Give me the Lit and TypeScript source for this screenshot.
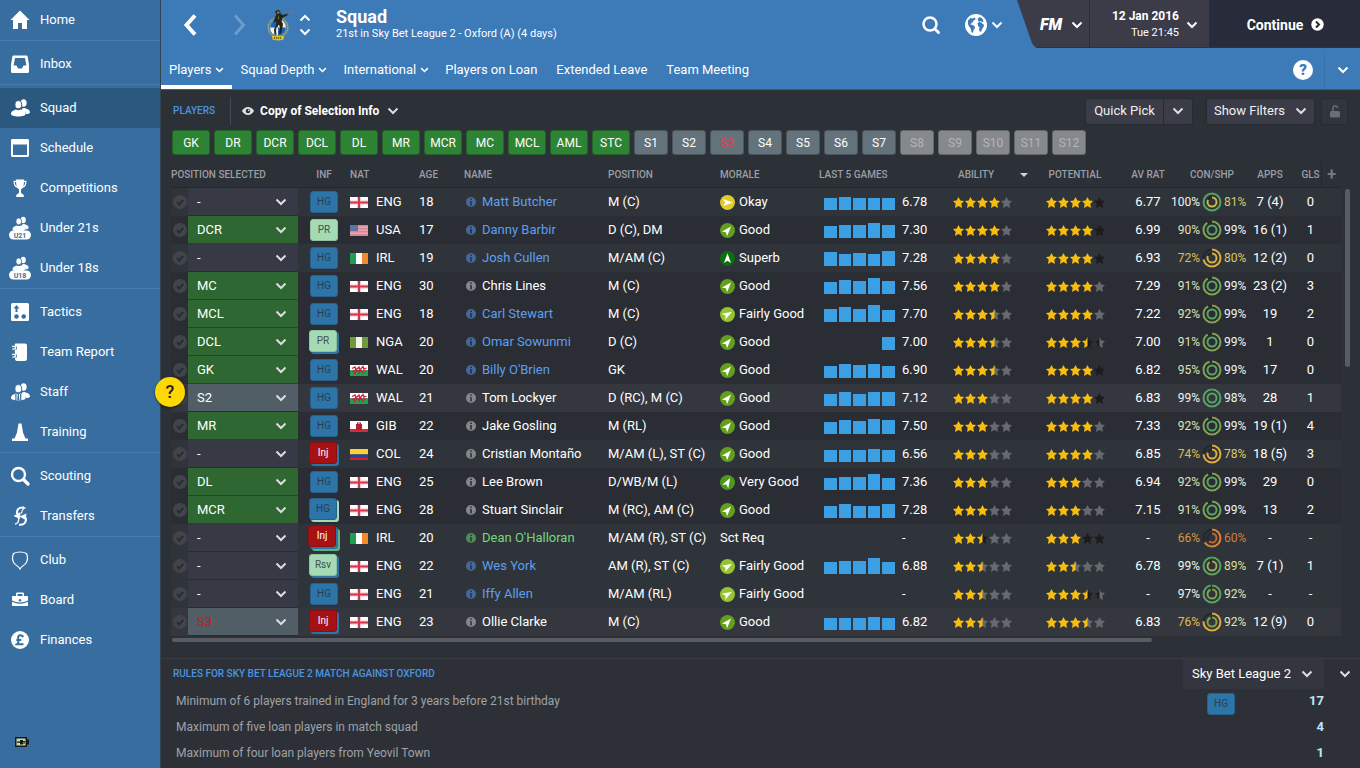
import { LitElement, html, css, svg, nothing } from "lit";
import { customElement } from "lit/decorators.js";
import { classMap } from "lit/directives/class-map.js";

interface Player {
  pos: string;
  inf: string[];
  nat: string;
  age: number;
  name: string;
  tone: string;
  role: string;
  morale: string;
  bars: number[];
  form: string;
  ability: string;
  potential: string;
  rating: string;
  con: number;
  shp: number;
  apps: string;
  goals: string;
}

const p = (
  pos: string, inf: string, nat: string, age: number, name: string, tone: string, role: string,
  morale: string, bars: number[], form: string, ability: string, potential: string,
  rating: string, con: number, shp: number, apps: string, goals: string,
): Player => ({ pos, inf: inf.split(" "), nat, age, name, tone, role, morale, bars, form, ability, potential, rating, con, shp, apps, goals });

// Star codes: F gold, G grey, K black, H gold/grey, B gold/black, C black/grey.
const PLAYERS: Player[] = [
  p("-", "HG", "ENG", 18, "Matt Butcher", "blue", "M (C)", "Okay", [12, 13, 12, 12, 12], "6.78", "FFFFG", "FFFFK", "6.77", 100, 81, "7 (4)", "0"),
  p("DCR", "PR", "USA", 17, "Danny Barbir", "blue", "D (C), DM", "Good", [12, 13, 13, 15, 13], "7.30", "FFFFG", "FFFFK", "6.99", 90, 99, "16 (1)", "1"),
  p("-", "HG", "IRL", 19, "Josh Cullen", "blue", "M/AM (C)", "Superb", [14, 12, 13, 12, 15], "7.28", "FFFFG", "FFFFK", "6.93", 72, 80, "12 (2)", "0"),
  p("MC", "HG", "ENG", 30, "Chris Lines", "white", "M (C)", "Good", [12, 14, 13, 16, 13], "7.56", "FFFFG", "FFFFG", "7.29", 91, 99, "23 (2)", "3"),
  p("MCL", "HG", "ENG", 18, "Carl Stewart", "blue", "M (C)", "Fairly Good", [13, 15, 13, 17, 12], "7.70", "FFFHG", "FFFFG", "7.22", 92, 99, "19", "2"),
  p("DCL", "PR HG", "NGA", 20, "Omar Sowunmi", "blue", "D (C)", "Good", [0, 0, 0, 0, 13], "7.00", "FFFHG", "FFFBC", "7.00", 91, 99, "1", "0"),
  p("GK", "HG", "WAL", 20, "Billy O'Brien", "blue", "GK", "Good", [12, 14, 13, 14, 12], "6.90", "FFFHG", "FFFFK", "6.82", 95, 99, "17", "0"),
  p("S2", "HG", "WAL", 21, "Tom Lockyer", "white", "D (RC), M (C)", "Good", [12, 14, 12, 14, 14], "7.12", "FFFGG", "FFFFK", "6.83", 99, 98, "28", "1"),
  p("MR", "HG", "GIB", 22, "Jake Gosling", "white", "M (RL)", "Good", [12, 14, 13, 15, 14], "7.50", "FFFGG", "FFFFG", "7.33", 92, 99, "19 (1)", "4"),
  p("-", "Inj HG", "COL", 24, "Cristian Montaño", "white", "M/AM (L), ST (C)", "Good", [12, 12, 12, 13, 12], "6.56", "FFFGG", "FFFFG", "6.85", 74, 78, "18 (5)", "3"),
  p("DL", "HG", "ENG", 25, "Lee Brown", "white", "D/WB/M (L)", "Very Good", [12, 13, 13, 16, 12], "7.36", "FFFGG", "FFFGG", "6.94", 92, 99, "29", "0"),
  p("MCR", "HG PR", "ENG", 28, "Stuart Sinclair", "white", "M (RC), AM (C)", "Good", [12, 14, 12, 12, 14], "7.28", "FFFGG", "FFFGG", "7.15", 91, 99, "13", "2"),
  p("-", "Inj HG Lst", "IRL", 20, "Dean O'Halloran", "green", "M/AM (R), ST (C)", "Sct Req", [], "-", "FFBGG", "FFFKK", "-", 66, 60, "-", "-"),
  p("-", "Rsv HG", "ENG", 22, "Wes York", "blue", "AM (R), ST (C)", "Fairly Good", [12, 13, 13, 16, 12], "6.88", "FFHGG", "FFHGG", "6.78", 99, 89, "7 (1)", "1"),
  p("-", "HG", "ENG", 21, "Iffy Allen", "blue", "M/AM (RL)", "Fairly Good", [], "-", "FFHGG", "FFFBC", "-", 97, 92, "-", "-"),
  p("S3", "Inj HG", "ENG", 23, "Ollie Clarke", "white", "M (C)", "Good", [12, 12, 12, 13, 12], "6.82", "FFHGG", "FFFHG", "6.83", 76, 92, "12 (9)", "0"),
];

const FIRST_TEAM = ["GK", "DR", "DCR", "DCL", "DL", "MR", "MCR", "MC", "MCL", "AML", "STC"];
const SUBS = ["S1", "S2", "S3", "S4", "S5", "S6", "S7", "S8", "S9", "S10", "S11", "S12"];

const RULES = [
  { text: "Minimum of 6 players trained in England for 3 years before 21st birthday", badge: "HG", count: "17" },
  { text: "Maximum of five loan players in match squad", badge: "", count: "4" },
  { text: "Maximum of four loan players from Yeovil Town", badge: "", count: "1" },
];

const COLUMNS = [17, 110, 52, 69, 45, 144, 112, 99, 134, 93, 76, 52, 76, 40, 31, 20];

const people = svg`
  <ellipse cx="15.6" cy="7" rx="3" ry="3.8"/>
  <path d="M14 12.5c1 0 1.500-.6 2.300-.6 2.700 1 5.700 1.600 5.700 4.300 0 1-1.500 1.700-3.600 1.900-1-1.900-2.600-3-4.600-3.800z"/>
  <ellipse class="cut" cx="10.300" cy="8.700" rx="3.400" ry="4.100"/>
  <path d="M3 18c0-3 2.800-3.700 5-4.600 1.500 1 3.200 1 4.700 0 2.200.9 5 1.600 5 4.600 0 1.500-3.200 2.500-7.400 2.500S3 19.500 3 18z"/>`;

const youth = (label: string) => svg`
  <g transform="translate(2 -2) scale(.85)">${people}</g>
  <rect x="1" y="14.500" width="22" height="9" rx="4.500"/>
  <text class="pill" x="12" y="21.500" text-anchor="middle">${label}</text>`;

const ICONS: Record<string, unknown> = {
  home: svg`<path d="M12 2.500 2.500 12H5v9h5v-6h4v6h5v-9h2.500L18.500 9z"/>`,
  inbox: svg`<path fill-rule="evenodd" d="M6 3.500h12c1 0 1.500.5 1.700 1.300L21 13v6.500c0 .9-.6 1.500-1.500 1.500h-15c-.9 0-1.500-.6-1.500-1.500V13l1.300-8.200C4.500 4 5 3.500 6 3.500zM7 6 5.600 13.500H8.500L10 16.500h4l1.500-3h2.900L17 6z"/>`,
  squad: people,
  schedule: svg`<path fill-rule="evenodd" d="M4.500 3h15c.9 0 1.500.6 1.500 1.500v15c0 .9-.6 1.500-1.500 1.500h-15c-.9 0-1.500-.6-1.500-1.500v-15C3 3.600 3.600 3 4.500 3zM5 8.500V19h14V8.500z"/>`,
  cup: svg`<path fill-rule="evenodd" d="M8 3.500h8v1.300h2.500c0 4-1 6.200-3.700 7-.6.9-1.200 1.300-1.800 1.600v3.200c0 1.400 2.800 1.500 2.800 3V21H8.200v-1.400c0-1.500 2.800-1.600 2.800-3v-3.200c-.6-.3-1.200-.7-1.800-1.600-2.700-.8-3.700-3-3.700-7H8zM6.800 6c.2 2 .6 3.400 1.700 4.200L8 6zm10.400 0H16l-.5 4.200c1.100-.8 1.500-2.200 1.700-4.200z"/>`,
  u21: youth("U21"),
  u18: youth("U18"),
  tactics: svg`<rect x="3" y="3" width="18" height="18" rx="1.500"/><g fill="#386e9f"><path d="M8.500 5 5.500 8.500h2V12h2V8.500h2z"/><circle cx="8.500" cy="16.500" r="2.300"/><circle cx="15.700" cy="16.500" r="2.300"/></g>`,
  report: svg`<path d="M7.500 3.500h9.500c1.400 0 2 .7 2 2v13c0 1.500-.7 2.500-2 2.500H9c-1.200 0-1.700-.8-2-2l-.3-13c0-1.500.2-2.500.8-2.500z"/><g fill="none" stroke="#386e9f" stroke-width="3"><path d="M4 8h5M4 16h5"/></g><path fill="none" stroke="#fff" stroke-width="1.300" d="M4 6.500c5-1 5 3 .500 2.500M4 14.500c5-1 5 3 .500 2.500"/>`,
  staff: svg`${people}<path fill="#386e9f" d="M7.300 14h1.200v7H7.300zM12.100 14h1.200v7h-1.200zM9.800 14h1l.6 6.500h-2.200z"/>`,
  training: svg`<path d="M10.500 3.500h3l1.500 9 2.500 6H20V21H4v-2.500h2.500L9 12.500z"/>`,
  scouting: svg`<circle cx="10.500" cy="10.500" r="6.500" fill="none" stroke="#fff" stroke-width="2.400"/><path d="m15.500 15.500 4.500 4.500" stroke="#fff" stroke-width="3.400" stroke-linecap="round"/>`,
  transfers: svg`<g fill="none" stroke="#fff" stroke-width="2"><path d="M16 3.500C10.500 3 8.500 6 9 10"/><path d="M11 20.800c5.500.5 7.500-2.500 7-7.300"/></g><path d="M5.500 12 12.500 8 12 15zM11.500 12.500 18.500 9.500l-1 6.500z"/><path fill="none" stroke="#fff" stroke-width="1.300" d="M17.500 3.500c-3 1.500-4 3-4 6M7 20c3.500-.5 4-2.500 3.500-6"/>`,
  club: svg`<path fill="none" stroke="#fff" stroke-width="1.200" d="M12 4c3 0 4.500.5 6.500 1.500C20 9 20 12 18 15c-1.500 2.500-4.500 3-6 6-1.500-3-4.500-3.500-6-6-2-3-2-6-.5-9.500C7.500 4.500 9 4 12 4z"/>`,
  board: svg`<path fill-rule="evenodd" d="M8 8V6c0-1 .5-1.500 1.500-1.500h5c1 0 1.500.5 1.500 1.500v2h3c.7 0 1 .3 1 1v3.500c-3 1.300-5 2-8 2s-5-.7-8-2V9c0-.7.300-1 1-1zm1.500 0h5V6h-5z"/><path d="M4 13.800c3 1.300 5 1.900 8 1.900s5-.6 8-1.900V17c0 .7-.3 1-1 1H5c-.7 0-1-.3-1-1z"/><circle cx="12" cy="12.300" r="1.200" fill="#386e9f"/>`,
  money: svg`<circle cx="12" cy="12" r="9"/><path fill="none" stroke="#386e9f" stroke-width="2" d="M15 9.300c-.4-1.500-1.500-2-2.500-2-2 0-2.700 1.500-2.300 3.200.6 2.500.4 4.500-1.200 5.700h6.500M8.300 12h5"/>`,
};

const NAV: [string, string][][] = [
  [["home", "Home"]],
  [["inbox", "Inbox"]],
  [["squad", "Squad"], ["schedule", "Schedule"], ["cup", "Competitions"], ["u21", "Under 21s"], ["u18", "Under 18s"]],
  [["tactics", "Tactics"], ["report", "Team Report"], ["staff", "Staff"], ["training", "Training"]],
  [["scouting", "Scouting"], ["transfers", "Transfers"]],
  [["club", "Club"], ["board", "Board"], ["money", "Finances"]],
];

const TABS: [string, boolean][] = [
  ["Players", true], ["Squad Depth", true], ["International", true],
  ["Players on Loan", false], ["Extended Leave", false], ["Team Meeting", false],
];

const FLAGS: Record<string, unknown> = {
  ENG: svg`<path fill="#fff" d="M0 0h18v11H0z"/><path fill="#f0c4ca" d="M7 0h4v11H7zM0 3.500h18v4H0z"/><path fill="#d3354a" d="M8 0h2v11H8zM0 4.500h18v2H0z"/>`,
  USA: svg`<path fill="#e8a9b2" d="M0 0h18v11H0z"/><path fill="#d98493" d="M0 0h18v1.500H0zM0 3h18v1.500H0zM0 6h18v1.500H0zM0 9h18v2H0z"/><path fill="#5c74a6" d="M0 0h8v6H0z"/>`,
  IRL: svg`<path fill="#fff" d="M0 0h18v11H0z"/><path fill="#1f9d50" d="M0 0h6v11H0z"/><path fill="#f58a2a" d="M12 0h6v11h-6z"/>`,
  NGA: svg`<path fill="#f2f4ec" d="M0 0h18v11H0z"/><path fill="#6e9a3a" d="M0 0h6v11H0zM12 0h6v11h-6z"/>`,
  WAL: svg`<path fill="#fff" d="M0 0h18v5.500H0z"/><path fill="#21a14d" d="M0 5.500h18V11H0z"/><path fill="none" stroke="#c9203c" stroke-width="1.300" d="M2 3.500 5 2l1 3-3 1.500 2.500 1L4 9.500M6 5l3-3 1 3.500L8.500 9M10 5l3-3.500L14 4l2.500-1M11.500 6.500 14 8.500M13 5l3 1.500M6 6h6"/>`,
  GIB: svg`<path fill="#fff" d="M0 0h18v11H0z"/><path fill="#d8283c" d="M0 8h18v3H0z"/><path fill="#b3202e" d="M6 3h1V1.500h1V3h.5V1h1v2h.5V1.500h1V3h1v6H6z"/>`,
  COL: svg`<path fill="#fbd13a" d="M0 0h18v5.500H0z"/><path fill="#2243a0" d="M0 5.500h18v3H0z"/><path fill="#d21f35" d="M0 8.500h18V11H0z"/>`,
};

const MORALE: Record<string, [string, number]> = {
  "Okay": ["#dfcb2c", 90],
  "Fairly Good": ["#94c52c", 60],
  "Good": ["#62a01c", 42],
  "Very Good": ["#4d9a1c", 30],
  "Superb": ["#0f6c10", 0],
};

const STAR = "M5.500 0 7.300 3.500 11 4 8.300 6.800 9 10.900 5.500 9 2 10.900 2.700 6.800 0 4 3.700 3.500z";
const STAR_LEFT = "M5.500 0V9L2 10.900 2.700 6.800 0 4 3.700 3.500z";
const GOLD = "#f9bd0c", GREY = "#67696f", BLACK = "#1c1c1e";
const STAR_FILL: Record<string, [string, string]> = {
  F: [GOLD, GOLD], G: [GREY, GREY], K: [BLACK, BLACK], H: [GOLD, GREY], B: [GOLD, BLACK], C: [BLACK, GREY],
};

const chevron = () => html`<svg class="chev" viewBox="0 0 12 8" aria-hidden="true"><path d="m1.500 1.500 4.500 4.500 4.500-4.500"/></svg>`;

const stars = (code: string) => html`
  <svg class="stars" viewBox="0 0 60 11" role="img" aria-label="Stars">
    ${[...code].map((c, i) => {
      const [left, right] = STAR_FILL[c];
      return svg`<g transform="translate(${i * 12} 0)"><path d=${STAR} fill=${right}/>${left !== right ? svg`<path d=${STAR_LEFT} fill=${left}/>` : nothing}</g>`;
    })}
  </svg>`;

const ringTone = (v: number) =>
  v >= 97 ? "#58a566" : v >= 90 ? "#82a34f" : v >= 85 ? "#9fac4e" : v >= 80 ? "#d2b741" : v >= 70 ? "#e3ad3d" : v >= 65 ? "#dd8535" : "#cb6433";
const textTone = (v: number) =>
  v >= 97 ? "t-top" : v >= 90 ? "t-high" : v >= 85 ? "t-good" : v >= 77 ? "t-mid" : v >= 70 ? "t-low" : v >= 65 ? "t-poor" : "t-bad";

const arc = (r: number, v: number) => {
  const len = 2 * Math.PI * r;
  return svg`<circle cx="10" cy="10" r=${r} stroke="#24272d"/>
    <circle cx="10" cy="10" r=${r} stroke=${ringTone(v)} stroke-dasharray="${(len * v) / 100} ${len}" transform="rotate(-90 10 10)"/>`;
};

const badge = (codes: string[]) => html`<span class=${"badge b-" + codes.join("-").toLowerCase()}>${codes[0]}</span>`;

@customElement("app-root")
export class AppRoot extends LitElement {
  static styles = css`
    :host {
      display: grid;
      grid-template-columns: 160px minmax(0, 1fr);
      min-height: 100vh;
      position: relative;
      background: #2c3037;
      color: #fff;
      font: 13px/16px Roboto, "Liberation Sans", sans-serif;
    }
    * { box-sizing: border-box; }
    button, select { font: inherit; color: inherit; background: none; border: 0; padding: 0; margin: 0; }
    button { display: inline-flex; align-items: center; cursor: pointer; }
    select { appearance: none; cursor: pointer; }
    option { background: #373a44; color: #fff; }
    a { color: inherit; text-decoration: none; }
    h1, h2, p { margin: 0; font-size: inherit; }
    svg { display: block; flex: none; }
    .chev { width: 12px; height: 8px; fill: none; stroke: #dcdddf; stroke-width: 2; }

    .side { background: #386e9f; display: flex; flex-direction: column; justify-content: space-between; }
    .group { list-style: none; margin: 0; border-bottom: 1px solid #4a7eae; padding: 0; }
    .group + .group { padding-top: 3px; }
    .group:last-child { border-bottom: 0; }
    .nav { display: flex; align-items: center; gap: 8px; height: 40px; padding-left: 8px; }
    .nav svg { width: 24px; height: 24px; fill: #fff; }
    .nav.on { background: #2b587f; }
    .cut { stroke: #386e9f; stroke-width: 1; }
    .nav.on .cut { stroke: #2b587f; }
    .pill { font: 700 7px Roboto, sans-serif; fill: #386e9f; }
    .battery { width: 14px; height: 10px; margin: 0 0 21px 15px; }

    .main { border-left: 1px solid #33424f; min-width: 0; display: flex; flex-direction: column; }
    .head { background: #3c7ab8; border-bottom: 1px solid #2f5f8f; height: 90px; display: flex; flex-direction: column; }
    .top { display: flex; height: 50px; align-items: flex-start; }
    .top-left { display: flex; align-items: center; height: 50px; flex: 1; padding-left: 22px; }
    .arrow { width: 14px; height: 22px; fill: none; stroke: #fff; stroke-width: 4; }
    .back { margin-right: 36px; }
    .fwd { opacity: .25; margin-right: 19px; }
    .fwd .arrow { stroke-width: 3; }
    .crest { width: 28px; height: 32px; }
    .updown { display: flex; flex-direction: column; gap: 6px; margin: 0 25px 0 5px; }
    .updown .chev, .tools .chev, .clock .chev, .tabs .chev { stroke: #fff; }
    .flip { transform: rotate(180deg); }
    .title { padding-bottom: 4px; }
    .title h1 { font-size: 18px; line-height: 20px; font-weight: 700; }
    .title p { font-size: 11px; line-height: 13px; }
    .tools { display: flex; align-items: center; gap: 24px; height: 50px; padding-right: 14px; }
    .tools button { gap: 4px; }
    .find { width: 20px; height: 20px; fill: none; stroke: #fff; stroke-width: 2.500; stroke-linecap: round; }
    .globe { width: 22px; height: 22px; }
    .clock {
      display: flex; height: 48px; background: #3b3c47; border-bottom: 1px solid #2a3342;
      clip-path: polygon(0 0, 100% 0, 100% 100%, 20px 100%, 17px 46px, 15px 43px);
    }
    .fm { width: 73px; padding: 2px 0 0 23px; gap: 9px; border-right: 1px solid #2a2c37; }
    .fm-logo { font: italic 900 16px/16px Roboto, sans-serif; }
    .date { width: 119px; justify-content: flex-end; gap: 7px; padding: 2px 11px 0 0; text-align: right; }
    .date b { display: block; font-size: 12px; }
    .date span span { font-size: 11px; }
    .continue { width: 151px; justify-content: center; gap: 8px; background: #282b39; font-weight: 700; font-size: 14px; padding: 2px 0 0 2px; }
    .continue svg { width: 13px; height: 13px; }
    .tabs { display: flex; align-items: stretch; height: 40px; }
    .tab { display: flex; align-items: center; gap: 4px; padding: 0 8px; border-top: 4px solid transparent; border-bottom: 4px solid transparent; }
    .tab .chev { width: 9px; height: 6px; }
    .tab.plain { padding-right: 11px; }
    .tab.on { border-bottom-color: #fff; }
    .tab-end { margin-left: auto; display: flex; align-items: center; }
    .help { width: 20px; height: 20px; border-radius: 50%; background: #fff; color: #3c7ab8; font-weight: 900; font-size: 15px; justify-content: center; margin-right: 11px; }
    .more { height: 39px; width: 36px; justify-content: center; border-left: 1px solid #3870a9; }

    .bar { display: flex; align-items: center; height: 40px; padding: 2px 12px 0; }
    .bar h2, .rules h2 { color: #4a95e0; font-size: 10px; font-weight: 500; }
    .view { height: 28px; margin-left: 15px; padding-left: 11px; gap: 6px; border-left: 1px solid #484b52; font-weight: 700; font-size: 12px; }
    .view .eye { width: 12px; height: 8px; }
    .view .chev { margin-left: 2px; }
    .acts { margin-left: auto; display: flex; align-items: center; gap: 6px; }
    .btn { height: 27px; background: #3a3c47; border: 1px solid #262a31; border-radius: 3px; justify-content: center; color: #f0f0f0; }
    .split { display: flex; margin-right: 7px; }
    .quick { width: 79px; border-radius: 3px 0 0 3px; }
    .drop { width: 29px; border-left: 0; border-radius: 0 3px 3px 0; }
    .filters { width: 109px; gap: 10px; }
    .lock { width: 27px; background: #31353c; }
    .lock svg { width: 12px; height: 13px; }

    .chips { display: flex; gap: 4px; padding: 0 11px; height: 31px; align-items: flex-start; }
    .chip { width: 38px; height: 25px; justify-content: center; border-radius: 3px; background: #2d8434; border: 1px solid #236329; font-size: 12px; }
    .chip.sub { width: 34px; background: #64737b; border-color: #4a545b; }
    .chip.out { color: #e5404a; }
    .chip.off { background: #85888c; border-color: #63666b; color: #b4b6b9; }

    .grid { display: flex; gap: 4px; padding: 0 10px; }
    table { table-layout: fixed; border-spacing: 0; width: 100%; }
    .squad { flex: 1; min-width: 0; }
    .squad th { height: 27px; padding: 1px 0 0; text-align: left; font-size: 10px; font-weight: 500; color: #9b9ea3; white-space: nowrap; border-bottom: 1px solid #24272d; }
    .squad th.mid { text-align: center; }
    .squad td { height: 28px; padding: 0; white-space: nowrap; }
    .squad td.mid { text-align: center; }
    .squad th.plus { border-left: 1px solid #24272d; text-align: center; font-size: 16px; color: #777a80; font-weight: 700; }
    .squad .gls { padding-left: 10px; text-align: center; }
    .sorted { display: flex; align-items: center; justify-content: space-between; padding: 0 18px 0 5px; }
    .sorted i { border: 4px solid transparent; border-top-color: #d0d2d5; border-bottom: 0; }
    .r-idle { background: #2f343a; }
    .r-team { background: #2a2d34; }
    .r-sub { background: #34383e; }
    .tick { display: grid; place-items: center; height: 28px; }
    .tick input, .tick svg { grid-area: 1 / 1; }
    .tick input { appearance: none; margin: 0; width: 14px; height: 14px; border-radius: 50%; background: #414449; }
    .tick svg { width: 10px; height: 10px; fill: none; stroke: #2a2d33; stroke-width: 2; pointer-events: none; }
    .pick { display: grid; align-items: center; height: 28px; border-bottom: 1px solid #2a2c33; background: #373a44; }
    .pick select { grid-area: 1 / 1; width: 100%; height: 27px; padding-left: 9px; }
    .pick .chev { grid-area: 1 / 1; justify-self: end; margin-right: 11px; pointer-events: none; }
    .r-team .pick { background: #2e6732; border-bottom-color: #22482a; }
    .r-sub .pick { background: #525e66; }
    .pick.out { color: #d0121c; }

    .badge { display: inline-grid; place-items: center; width: 28px; height: 22px; border-radius: 3px; font-size: 10px; line-height: 12px; vertical-align: middle; background: #2d74a9; color: #2c3c50; border: 1px solid #27618f; }
    .b-pr, .b-pr-hg, .b-rsv-hg { background: #a4dab4; border-color: #8fc3a0; color: #42514c; }
    .b-inj-hg, .b-inj-hg-lst { background: #a61214; border-color: #8a0f12; color: #fff; }
    .b-pr-hg, .b-rsv-hg, .b-inj-hg, .b-hg-pr { margin: 0 2px 2px 0; }
    .b-pr-hg, .b-rsv-hg, .b-inj-hg { box-shadow: 2px 2px 0 #2d74a9; }
    .b-hg-pr { box-shadow: 2px 2px 0 #a4dab4; }
    .b-inj-hg-lst { margin: 0 4px 4px 0; box-shadow: 2px 2px 0 #2d74a9, 4px 4px 0 #5fb27a; }

    .row { display: flex; align-items: center; }
    .flag { width: 18px; height: 11px; margin-right: 8px; }
    .info { width: 10px; height: 10px; margin: 0 6px 0 2px; fill: #83868a; }
    .n-blue { color: #5e9ff0; }
    .n-blue .info { fill: #44689a; }
    .n-green { color: #76d77c; }
    .n-green .info { fill: #4d8d57; }
    .face { width: 15px; height: 15px; margin-right: 4px; }
    .form { display: grid; grid-template-columns: 5px 71px 1fr; align-items: center; height: 28px; }
    .bars { display: grid; grid-template-columns: repeat(5, 1fr); gap: 2px; align-items: end; align-self: end; margin-bottom: 6px; }
    .bars i { background: #3aa0e3; }
    .form span { padding-left: 7px; grid-column: 3; }
    .bars { grid-column: 2; }
    .stars { width: 60px; height: 11px; }
    .cond { display: grid; grid-template-columns: 26px 20px 26px; column-gap: 2px; justify-content: center; align-items: center; font-size: 12px; }
    .cond svg { width: 20px; height: 20px; fill: none; stroke-width: 2; }
    .cond span { justify-self: end; }
    .cond span:last-child { justify-self: start; }
    .t-top { color: #f0f5ee; }
    .t-high { color: #dfe3b4; }
    .t-good { color: #dfdc98; }
    .t-mid { color: #ddc765; }
    .t-low { color: #e1bd50; }
    .t-poor { color: #dd9440; }
    .t-bad { color: #d57a3d; }
    .vbar { width: 5px; height: 178px; margin-top: 28px; border-radius: 3px; background: #5a5c61; }
    .hbar { height: 4px; margin: 2px 208px 0 11px; border-radius: 2px; background: #5a5c61; }

    .rules { margin-top: 16px; border-top: 1px solid #393c42; background: #2d3137; flex: 1; }
    .rules-head { display: flex; align-items: center; height: 30px; padding: 0 9px 0 12px; }
    .league { margin-left: auto; display: grid; align-items: center; background: #33363e; width: 141px; height: 30px; }
    .league select { grid-area: 1 / 1; padding-left: 9px; height: 30px; }
    .league .chev { grid-area: 1 / 1; justify-self: end; margin-right: 11px; pointer-events: none; }
    .fold { margin-left: 15px; }
    .rules td { height: 26px; padding: 0 0 2px; font-size: 12px; color: #9fa2a6; }
    .rules td:first-child { padding-left: 15px; }
    .rules td:last-child { padding-right: 36px; text-align: right; font-weight: 700; font-size: 13px; color: #c4e4f8; }
    .rules .mark { line-height: 0; padding: 4px 0 0; }

    .guide {
      position: absolute; left: 155px; top: 377px; width: 30px; height: 30px; border-radius: 50%;
      background: #fdd804; color: #222; font-size: 18px; font-weight: 500; justify-content: center;
      box-shadow: 0 1px 3px #0008;
    }
  `;

  render() {
    return html`
      <nav class="side">
        <div>${NAV.map((group) => html`<ul class="group">
          ${group.map(([icon, label]) => html`<li><a href="#" class=${classMap({ nav: true, on: label === "Squad" })}>
            <svg viewBox="0 0 24 24" aria-hidden="true">${ICONS[icon]}</svg>${label}</a></li>`)}
        </ul>`)}</div>
        <svg class="battery" viewBox="0 0 14 10" aria-hidden="true">
          <path fill="#16181a" d="M0 0h12v2.500h2v5h-2V10H0z"/><path fill="#c3dba6" d="M1.500 1.500h9v7h-9z"/>
          <path fill="#16181a" d="M2 4.500h3V3h3v1h2v1H8v.6h2v1H8V7.500H5V5.700H2z"/>
        </svg>
      </nav>
      <main class="main">
        ${this.header()}
        ${this.toolbar()}
        <div class="chips">
          ${FIRST_TEAM.map((c) => html`<button class="chip">${c}</button>`)}
          ${SUBS.map((c, i) => html`<button class=${classMap({ chip: true, sub: true, out: c === "S3", off: i > 6 })}>${c}</button>`)}
        </div>
        <div class="grid">
          ${this.table()}
          <div class="vbar"></div>
        </div>
        <div class="hbar"></div>
        ${this.rules()}
      </main>
      <button class="guide" aria-label="Guide">?</button>
    `;
  }

  header() {
    return html`<header class="head">
      <div class="top">
        <div class="top-left">
          <button class="back" aria-label="Back"><svg class="arrow" viewBox="0 0 14 22"><path d="M12 1.500 3.500 11 12 20.500"/></svg></button>
          <button class="fwd" aria-label="Forward"><svg class="arrow" viewBox="0 0 14 22"><path d="M2 1.500 10.500 11 2 20.500"/></svg></button>
          <svg class="crest" viewBox="0 0 28 32" aria-hidden="true">
            <circle cx="12" cy="18.500" r="11" fill="#5d8496"/><circle cx="12" cy="18.500" r="9.700" fill="none" stroke="#c3bf86" stroke-width="1" stroke-dasharray="1.500 1"/>
            <circle cx="12" cy="18.500" r="8" fill="#eef2f6"/>
            <path fill="#1d63b4" d="M4 18.500H12v-8a8 8 0 0 0-8 8zM12 18.500h8a8 8 0 0 1-8 8z"/>
            <path fill="#25251a" d="M9 3 11 1l3 .5.500 3 2 1.500 5.500-1.500.5 1.200-6 3-1 3.500 1.500 2.500-.5 4-1.500 6h-2l1-6-1-3-2.500 2-.5 4 .5 4H8.500L8 20.500l2-4.500.500-4-2 1.500-1-1L9 8.500 10.500 5z"/>
            <path fill="#8b8155" d="M11 2.500h2.500v2H11zM12 6l1 3-1 2z"/>
            <path stroke="#7d7a62" stroke-width=".8" d="M21 5.500 28 2"/>
            <path fill="#e0c41e" d="M6 27h12l-.5 3.500q-5.500 2-11 0z"/><path stroke="#5a4c10" stroke-width="1.500" stroke-dasharray="1.200 .8" d="M8 29h8"/>
          </svg>
          <div class="updown">
            <button class="flip" aria-label="Previous team">${chevron()}</button>
            <button aria-label="Next team">${chevron()}</button>
          </div>
          <div class="title"><h1>Squad</h1><p>21st in Sky Bet League 2 - Oxford (A) (4 days)</p></div>
        </div>
        <div class="tools">
          <button aria-label="Search"><svg class="find" viewBox="0 0 20 20"><circle cx="9" cy="9" r="6.500"/><path stroke-width="3" d="m14.500 14.500 3 3"/></svg></button>
          <button aria-label="World">
            <svg class="globe" viewBox="0 0 22 22"><circle cx="11" cy="11" r="11" fill="#fff"/>
              <path fill="#3c7ab8" d="M3 6.500 5.500 4l2 .5L10 3.500l.5 2-2 1L8 8 6.500 9l-1 1.500 2 .5 2 1 .5 2-1.500 2-.5 3-1.500-1-1-4-1.500-1.500L3 10zM12.500 5l2-2 2 1 1.500 1.500.500 2-1.500.5-1.500-1-1.500 1zM12.500 9l2-1 2 .5 1 1.500 1.500.5L18.500 13l-1.500 2-.5 2-1.500 1-1-2.500.5-2-1.500-1.500z"/></svg>
            ${chevron()}
          </button>
        </div>
        <div class="clock">
          <button class="fm" aria-label="Game menu"><span class="fm-logo">FM</span>${chevron()}</button>
          <button class="date"><span><b>12 Jan 2016</b><span>Tue 21:45</span></span>${chevron()}</button>
          <button class="continue">Continue
            <svg viewBox="0 0 13 13"><circle cx="6.500" cy="6.500" r="6.200" fill="#fff"/><path d="M5 3.500 8 6.500 5 9.500" fill="none" stroke="#282b39" stroke-width="2"/></svg>
          </button>
        </div>
      </div>
      <nav class="tabs">
        ${TABS.map(([label, menu], i) => html`<a href="#" class=${classMap({ tab: true, on: i === 0, plain: !menu })}>${label}${menu ? chevron() : nothing}</a>`)}
        <div class="tab-end"><button class="help" aria-label="Help">?</button><button class="more" aria-label="More">${chevron()}</button></div>
      </nav>
    </header>`;
  }

  toolbar() {
    return html`<section class="bar">
      <h2>PLAYERS</h2>
      <button class="view">
        <svg class="eye" viewBox="0 0 12 8"><path fill="#e3e3e3" d="M0 4C3-1.300 9-1.300 12 4 9 9.300 3 9.300 0 4z"/><circle cx="6" cy="4" r="2.300" fill="#2c3037"/><circle cx="6.700" cy="3.400" r=".8" fill="#e3e3e3"/></svg>
        Copy of Selection Info ${chevron()}
      </button>
      <div class="acts">
        <div class="split"><button class="btn quick">Quick Pick</button><button class="btn drop" aria-label="Quick pick options">${chevron()}</button></div>
        <button class="btn filters">Show Filters ${chevron()}</button>
        <button class="btn lock" aria-label="Lock"><svg viewBox="0 0 12 13"><path fill="none" stroke="#6b6e73" stroke-width="1.500" d="M4 6V3.500a2.300 2.300 0 0 1 4.600-.3"/><rect x="1" y="6" width="10" height="6.500" rx="1.500" fill="#6b6e73"/></svg></button>
      </div>
    </section>`;
  }

  table() {
    return html`<table class="squad">
      <colgroup>${COLUMNS.map((w) => html`<col width=${w}>`)}</colgroup>
      <thead><tr>
        <th colspan="2">POSITION SELECTED</th><th class="mid">INF</th><th>NAT</th><th>AGE</th><th>NAME</th><th>POSITION</th>
        <th>MORALE</th><th>LAST 5 GAMES</th><th><div class="sorted">ABILITY<i></i></div></th><th>&nbsp;POTENTIAL</th>
        <th class="mid">AV RAT</th><th class="mid">CON/SHP</th><th class="mid">APPS</th><th class="gls">GLS</th><th class="plus">+</th>
      </tr></thead>
      <tbody>${PLAYERS.map((pl) => this.playerRow(pl))}</tbody>
    </table>`;
  }

  playerRow(pl: Player) {
    const kind = pl.pos === "-" ? "r-idle" : /^S\d/.test(pl.pos) ? "r-sub" : "r-team";
    const mood = MORALE[pl.morale];
    return html`<tr class=${kind}>
      <td><label class="tick"><input type="checkbox" aria-label="Select ${pl.name}"><svg viewBox="0 0 10 10"><path d="m2 5.200 2.200 2.300L8.300 2.800"/></svg></label></td>
      <td><div class=${classMap({ pick: true, out: pl.pos === "S3" })}>
        <select aria-label="Position for ${pl.name}">
          ${["-", ...FIRST_TEAM, ...SUBS].map((o) => html`<option ?selected=${o === pl.pos}>${o}</option>`)}
        </select>${chevron()}</div></td>
      <td class="mid">${badge(pl.inf)}</td>
      <td><div class="row"><svg class="flag" viewBox="0 0 18 11" aria-hidden="true">${FLAGS[pl.nat]}</svg>${pl.nat}</div></td>
      <td>${pl.age}</td>
      <td><a href="#" class=${"row n-" + pl.tone}><svg class="info" viewBox="0 0 10 10" aria-hidden="true"><path fill-rule="evenodd" d="M5 0a5 5 0 1 0 0 10A5 5 0 0 0 5 0zM4.200 1.500h1.600V3H4.200zm0 2.500h1.600v4.500H4.200z"/></svg>${pl.name}</a></td>
      <td>${pl.role}</td>
      <td><div class="row">${mood
        ? html`<svg class="face" viewBox="0 0 15 15" aria-hidden="true"><circle cx="7.500" cy="7.500" r="7.500" fill=${mood[0]}/><path fill="#fff" transform="rotate(${mood[1]} 7.500 7.500)" d="M7.500 2.200 11 12 7.500 9.800 4 12z"/></svg>`
        : nothing}${pl.morale}</div></td>
      <td><div class="form">
        ${pl.bars.length ? html`<div class="bars">${pl.bars.map((h) => html`<i style="height:${h}px"></i>`)}</div>` : nothing}
        <span>${pl.form}</span></div></td>
      <td>${stars(pl.ability)}</td>
      <td>${stars(pl.potential)}</td>
      <td class="mid">${pl.rating}</td>
      <td><div class="cond"><span class=${textTone(pl.con)}>${pl.con}%</span>
        <svg viewBox="0 0 20 20" aria-hidden="true">${arc(8.5, pl.con)}${arc(4.5, pl.shp)}</svg>
        <span class=${textTone(pl.shp)}>${pl.shp}%</span></div></td>
      <td class="mid">${pl.apps}</td>
      <td class="gls">${pl.goals}</td>
      <td></td>
    </tr>`;
  }

  rules() {
    return html`<section class="rules">
      <div class="rules-head">
        <h2>RULES FOR SKY BET LEAGUE 2 MATCH AGAINST OXFORD</h2>
        <div class="league"><select aria-label="Competition"><option>Sky Bet League 2</option></select>${chevron()}</div>
        <button class="fold" aria-label="Collapse">${chevron()}</button>
      </div>
      <table><colgroup><col><col width="64"><col width="89"></colgroup>
        <tbody>${RULES.map((r) => html`<tr><td>${r.text}</td><td class="mark">${r.badge ? badge([r.badge]) : nothing}</td><td>${r.count}</td></tr>`)}</tbody>
      </table>
    </section>`;
  }
}
